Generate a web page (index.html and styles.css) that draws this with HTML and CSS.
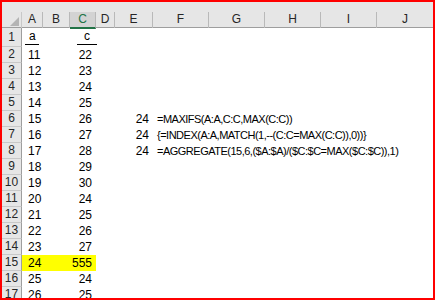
FILE: index.html
```html
<!DOCTYPE html>
<html>
<head>
<meta charset="utf-8">
<link rel="stylesheet" href="styles.css">
</head>
<body>
<div class="frame">
  <div class="topstrip"></div>
  <div class="row hdr">
    <div class="corner"><span class="tri"></span></div>
    <div class="ch">A</div><div class="ch">B</div><div class="ch sel">C</div><div class="ch">D</div><div class="ch">E</div>
    <div class="ch">F</div><div class="ch">G</div><div class="ch">H</div><div class="ch">I</div><div class="ch last">J</div>
  </div>
  <div class="row first">
    <div class="rh">1</div><div class="c"><span class="ul ula">a</span></div><div class="c"></div><div class="c"><span class="ul ulc">c</span></div><div class="c"></div><div class="c"></div><div class="c"></div><div class="c"></div><div class="c"></div><div class="c"></div><div class="c"></div>
  </div>
  <div class="row"><div class="rh">2</div><div class="c">11</div><div class="c"></div><div class="c r">22</div><div class="c"></div><div class="c"></div><div class="c"></div><div class="c"></div><div class="c"></div><div class="c"></div><div class="c"></div></div>
  <div class="row"><div class="rh">3</div><div class="c">12</div><div class="c"></div><div class="c r">23</div><div class="c"></div><div class="c"></div><div class="c"></div><div class="c"></div><div class="c"></div><div class="c"></div><div class="c"></div></div>
  <div class="row"><div class="rh">4</div><div class="c">13</div><div class="c"></div><div class="c r">24</div><div class="c"></div><div class="c"></div><div class="c"></div><div class="c"></div><div class="c"></div><div class="c"></div><div class="c"></div></div>
  <div class="row"><div class="rh">5</div><div class="c">14</div><div class="c"></div><div class="c r">25</div><div class="c"></div><div class="c"></div><div class="c"></div><div class="c"></div><div class="c"></div><div class="c"></div><div class="c"></div></div>
  <div class="row"><div class="rh">6</div><div class="c">15</div><div class="c"></div><div class="c r">26</div><div class="c"></div><div class="c r">24</div><div class="c f">=MAXIFS(A:A,C:C,MAX(C:C))</div><div class="c"></div><div class="c"></div><div class="c"></div><div class="c"></div></div>
  <div class="row"><div class="rh">7</div><div class="c">16</div><div class="c"></div><div class="c r">27</div><div class="c"></div><div class="c r">24</div><div class="c f">{=INDEX(A:A,MATCH(1,--(C:C=MAX(C:C)),0))}</div><div class="c"></div><div class="c"></div><div class="c"></div><div class="c"></div></div>
  <div class="row"><div class="rh">8</div><div class="c">17</div><div class="c"></div><div class="c r">28</div><div class="c"></div><div class="c r">24</div><div class="c f">=AGGREGATE(15,6,($A:$A)/($C:$C=MAX($C:$C)),1)</div><div class="c"></div><div class="c"></div><div class="c"></div><div class="c"></div></div>
  <div class="row"><div class="rh">9</div><div class="c">18</div><div class="c"></div><div class="c r">29</div><div class="c"></div><div class="c"></div><div class="c"></div><div class="c"></div><div class="c"></div><div class="c"></div><div class="c"></div></div>
  <div class="row"><div class="rh">10</div><div class="c">19</div><div class="c"></div><div class="c r">30</div><div class="c"></div><div class="c"></div><div class="c"></div><div class="c"></div><div class="c"></div><div class="c"></div><div class="c"></div></div>
  <div class="row"><div class="rh">11</div><div class="c">20</div><div class="c"></div><div class="c r">24</div><div class="c"></div><div class="c"></div><div class="c"></div><div class="c"></div><div class="c"></div><div class="c"></div><div class="c"></div></div>
  <div class="row"><div class="rh">12</div><div class="c">21</div><div class="c"></div><div class="c r">25</div><div class="c"></div><div class="c"></div><div class="c"></div><div class="c"></div><div class="c"></div><div class="c"></div><div class="c"></div></div>
  <div class="row"><div class="rh">13</div><div class="c">22</div><div class="c"></div><div class="c r">26</div><div class="c"></div><div class="c"></div><div class="c"></div><div class="c"></div><div class="c"></div><div class="c"></div><div class="c"></div></div>
  <div class="row"><div class="rh">14</div><div class="c">23</div><div class="c"></div><div class="c r">27</div><div class="c"></div><div class="c"></div><div class="c"></div><div class="c"></div><div class="c"></div><div class="c"></div><div class="c"></div></div>
  <div class="row"><div class="rh">15</div><div class="c hl">24</div><div class="c hl"></div><div class="c r hl">555</div><div class="c"></div><div class="c"></div><div class="c"></div><div class="c"></div><div class="c"></div><div class="c"></div><div class="c"></div></div>
  <div class="row"><div class="rh">16</div><div class="c">25</div><div class="c"></div><div class="c r">24</div><div class="c"></div><div class="c"></div><div class="c"></div><div class="c"></div><div class="c"></div><div class="c"></div><div class="c"></div></div>
  <div class="row"><div class="rh">17</div><div class="c">26</div><div class="c"></div><div class="c r">25</div><div class="c"></div><div class="c"></div><div class="c"></div><div class="c"></div><div class="c"></div><div class="c"></div><div class="c"></div></div>
</div>
</body>
</html>
```

FILE: styles.css
```css
html, body {
  margin: 0;
  padding: 0;
  background: #ffffff;
}
body {
  font-family: "Liberation Sans", Arial, sans-serif;
  font-size: 12px;
  color: #000;
}
.frame {
  width: 435px;
  height: 300px;
  box-sizing: border-box;
  border: 2px solid #ff0000;
  overflow: hidden;
  background: #fff;
}
.topstrip {
  height: 10px;
  background: #e6e6e6;
}
.row {
  display: grid;
  grid-template-columns: 20px 21px 27px 26px 19px 38px 56px 56px 56px 56px 56px;
  height: 16px;
}
.row.hdr {
  height: 16px;
  background: #e6e6e6;
  border-bottom: 1px solid #9e9e9e;
  box-sizing: border-box;
}
.row.first {
  height: 19px;
}
.corner {
  position: relative;
  border-right: 1px solid #c8c8c8;
}
.tri {
  position: absolute;
  right: 2px;
  bottom: 2px;
  width: 0;
  height: 0;
  border-left: 9px solid transparent;
  border-bottom: 9px solid #b4b4b4;
}
.ch {
  text-align: center;
  line-height: 15px;
  border-right: 1px solid #b9b9b9;
  color: #262626;
}
.ch.last {
  border-right: none;
}
.ch.sel {
  background: #d3d3d3;
  color: #217346;
  border-bottom: 2px solid #217346;
  margin-bottom: -1px;
}
.rh {
  background: #e6e6e6;
  border-right: 1px solid #9e9e9e;
  border-bottom: 1px solid #c8c8c8;
  text-align: center;
  line-height: 15px;
  color: #262626;
}
.row.first .rh {
  line-height: 18px;
}
.c {
  line-height: 16px;
  padding: 0 3px 0 6px;
  white-space: nowrap;
  overflow: visible;
}
.c.r {
  text-align: right;
  padding: 0 4px 0 2px;
}
.c.f {
  padding-left: 4px;
  font-size: 11px;
  letter-spacing: -0.5px;
}
.c.hl {
  background: #ffff00;
}
.ul {
  display: inline-block;
  border-bottom: 1px solid #000;
  line-height: 15px;
}
.ula {
  margin-left: -3px;
  width: 14px;
  padding-left: 4px;
  box-sizing: border-box;
}
.ulc {
  display: block;
  width: 20px;
  margin-left: 1px;
  text-align: center;
  padding-top: 1px;
}
```
